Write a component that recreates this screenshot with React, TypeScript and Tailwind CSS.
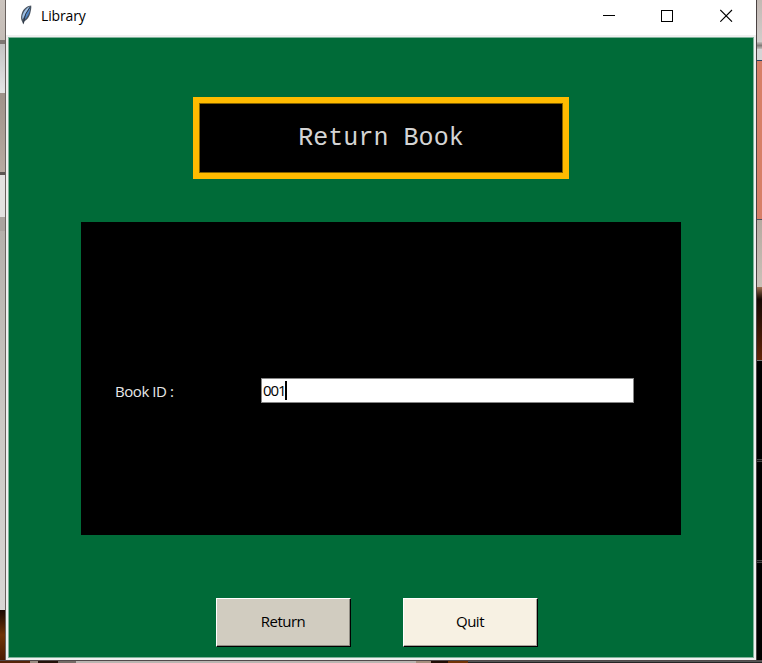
import React from "react";

function Feather() {
  return (
    <svg width="13" height="20" viewBox="0 0 13 20" className="block">
      <path d="M11.2 0.4C8 0.6 4.2 2.8 2.3 7C0.9 10.5 0.7 13 1.6 15.6L3.4 19.4L4.2 16.4C7.2 14.6 9.3 12 10.2 8.4C11 5.5 11.6 2.4 11.2 0.4Z" fill="#4a5460" />
      <path d="M10 1.4C7 2.4 4.2 5.2 2.9 9C2.1 11 2.1 12.6 2.5 14.4L6 8.6Z" fill="#9fc0e4" />
      <path d="M10.2 2.6C10 6 8.8 10 6.6 12.6C5.6 13.8 4.6 14.6 3.8 15L6 9.2Z" fill="#4f86c8" />
      <path d="M9.8 2.4L5.6 9L3.4 18.4" fill="none" stroke="#1f2a38" strokeWidth="0.8" />
    </svg>
  );
}

function TitleBar() {
  return (
    <header className="flex h-[35px] shrink-0 bg-white pl-[14px]">
      <div className="pt-[5px]"><Feather /></div>
      <div className="ml-[8px] pt-[6px] font-['Open_Sans',sans-serif] text-[14px] leading-5 tracking-[-0.15px] text-black">Library</div>
      <div className="mt-[9px] mr-[23px] ml-auto flex">
        <svg width="13" height="13" shapeRendering="crispEdges"><path d="M0 6.5H12" stroke="#000" /></svg>
        <svg className="ml-[45px]" width="12" height="13" shapeRendering="crispEdges"><path d="M0.5 1.5H11.5V12.5H0.5Z" fill="none" stroke="#000" /></svg>
        <svg className="ml-[47px]" width="13" height="13"><path d="M0.3 1L12 12.7M12 1L0.3 12.7" stroke="#000" strokeWidth="1.1" /></svg>
      </div>
    </header>
  );
}

function LeftBackdrop() {
  return (
    <div className="flex w-[6px] shrink-0 flex-col border-r border-[#69625f]">
      <div className="h-[40px] bg-linear-to-b from-[#cbc4be] to-[#c5bdb7]" />
      <div className="h-[4px] bg-[#7d7773]" />
      <div className="h-[49px] bg-linear-to-b from-[#c4c4c4] to-[#e5e5e5]" />
      <div className="h-[79px] bg-linear-to-b from-[#9f9289] to-[#b7aaa1]" />
      <div className="h-[3px] bg-[#5b5552]" />
      <div className="h-[42px] bg-[#e2e1e0]" />
      <div className="h-[14px] bg-[#aaa39f]" />
      <div className="h-[379px] bg-linear-to-b from-[#b5b0ab] via-[#cbc8c4] to-[#d8d6d4]" />
      <div className="flex-1 bg-linear-to-b from-[#1c0a02] via-[#703306] to-[#4a1d03]" />
    </div>
  );
}

function RightBackdrop() {
  return (
    <div className="flex w-[6px] shrink-0 flex-col border-l border-[#494242]">
      <div className="h-[42px] bg-linear-to-b from-[#c3b9b3] to-[#d1cdcb]" />
      <div className="h-[7px] bg-linear-to-b from-[#c3bebb] via-[#827c79] to-[#c3bebb]" />
      <div className="h-[11px] bg-[#d5d4d5]" />
      <div className="h-px bg-[#284465]" />
      <div className="h-[158px] bg-[#d77f67]" />
      <div className="h-px bg-[#4c5061]" />
      <div className="h-[67px] bg-linear-to-b from-[#b6aaa0] to-[#cac1b8]" />
      <div className="h-[12px] bg-linear-to-b from-[#9c7050] to-[#180b05]" />
      <div className="h-[61px] bg-linear-to-b from-[#160803] to-[#632407]" />
      <div className="h-px bg-[#777]" />
      <div className="h-[98px] bg-black" />
      <div className="h-[3px] border-y border-[#444] bg-[#111]" />
      <div className="h-[98px] bg-black" />
      <div className="h-[3px] border-y border-[#444] bg-[#111]" />
      <div className="flex-1 bg-black" />
    </div>
  );
}

function BottomBackdrop() {
  return (
    <div className="flex h-[3px] border-t border-[#51494a]">
      <div className="w-[30px] bg-[#542408]" />
      <div className="w-[8px] bg-[#9b8d82]" />
      <div className="w-[20px] bg-[#24120a]" />
      <div className="w-[18px] bg-[#746c66]" />
      <div className="w-[340px] bg-[#b9b5b1]" />
      <div className="w-[15px] bg-[#a58e7d]" />
      <div className="w-[17px] bg-[#200d04]" />
      <div className="w-[20px] bg-[#703306]" />
      <div className="flex-1 border-t border-[#555] bg-[#242424]" />
    </div>
  );
}

const buttonBase =
  "h-[49px] w-[135px] border border-t-white border-l-white border-r-black border-b-black pr-px pb-[2px] text-center text-[15px] leading-[45px] tracking-[-0.5px] text-black";

export default function App() {
  return (
    <div className="h-[663px] w-[762px] overflow-hidden font-['Open_Sans',sans-serif]">
      <div className="flex h-[660px]">
        <LeftBackdrop />
        <div className="flex w-[750px] flex-col bg-white">
          <TitleBar />
          <div className="flex-1 bg-[#f0f0f0] p-[2px]">
            <main className="flex h-[621px] flex-col items-center border border-[#80b39b] bg-[#006b38] pt-[59px]">
              <h1 className="h-[82px] w-[376px] border-[6px] border-[#ffbb00] bg-black text-center font-['Courier_New','Liberation_Mono',monospace] text-[25px] leading-[71px] tracking-[0.05px] text-[#d4d4d4] shadow-[inset_0_0_0_1px_#806000]">
                Return Book
              </h1>
              <section className="mt-[43px] flex h-[313px] w-[600px] bg-black pt-[156px]">
                <label className="ml-[34px] w-[146px] pt-[3px] text-[15px] leading-5 tracking-[-0.45px] text-[#e8e8e8]">Book ID :</label>
                <div className="flex h-[25px] w-[373px] items-center border border-[#868686] bg-white pl-px text-[15px] tracking-[-1.1px] text-black">
                  <span>001</span>
                  <span className="h-[19px] w-[2px] bg-black" />
                </div>
              </section>
              <div className="mt-[63px] mr-[8px] flex gap-[52px]">
                <button className={buttonBase + " bg-[#d1ccc0] shadow-[inset_-1px_-1px_#8f8b82]"}>Return</button>
                <button className={buttonBase + " bg-[#f7f1e3] shadow-[inset_-1px_-1px_#a9a59c]"}>Quit</button>
              </div>
            </main>
          </div>
        </div>
        <RightBackdrop />
      </div>
      <BottomBackdrop />
    </div>
  );
}
